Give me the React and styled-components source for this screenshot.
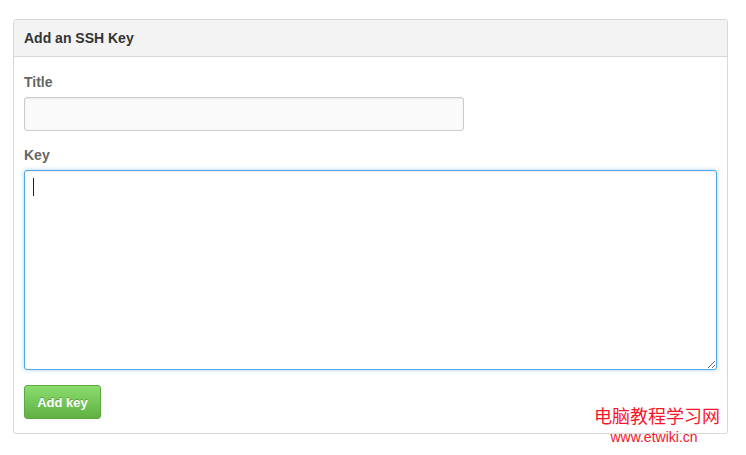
import React from "react";
import styled, { createGlobalStyle } from "styled-components";

const Global = createGlobalStyle`
  html, body { margin: 0; padding: 0; background: #fff; }
  body { font-family: "Liberation Sans", Arial, sans-serif; }
`;

const Page = styled.div`
  position: relative;
  width: 746px;
  height: 455px;
  padding: 19px 0 0 13px;
  box-sizing: border-box;
`;

const Box = styled.div`
  width: 715px;
  height: 415px;
  box-sizing: border-box;
  border: 1px solid #d8d8d8;
  border-radius: 3px;
  background: #fff;
  display: flex;
  flex-direction: column;
`;

const Header = styled.div`
  height: 37px;
  box-sizing: border-box;
  background: #f3f3f3;
  border-bottom: 1px solid #d8d8d8;
  border-radius: 3px 3px 0 0;
  padding: 0 10px;
  display: flex;
  align-items: center;
  font-size: 14px;
  font-weight: bold;
  color: #333;
`;

const Body = styled.div`
  padding: 16px 10px 0 10px;
  display: flex;
  flex-direction: column;
  align-items: flex-start;
`;

const Label = styled.label`
  font-size: 14px;
  font-weight: bold;
  color: #666;
  line-height: 18px;
  margin-bottom: 6px;
`;

const Input = styled.input`
  width: 440px;
  height: 34px;
  box-sizing: border-box;
  border: 1px solid #ccc;
  border-radius: 3px;
  background: #fafafa;
  box-shadow: inset 0 1px 2px rgba(0, 0, 0, 0.075);
  margin: 0 0 15px 0;
  outline: none;
  font: 13px "Liberation Sans", Arial, sans-serif;
`;

const AreaWrap = styled.div`
  position: relative;
  margin-bottom: 15px;
`;

const TextArea = styled.textarea`
  display: block;
  width: 693px;
  height: 200px;
  box-sizing: border-box;
  border: 1px solid #51a7e8;
  border-radius: 3px;
  box-shadow: inset 0 1px 2px rgba(0, 0, 0, 0.075), 0 0 4px rgba(81, 167, 232, 0.5);
  background: #fff;
  outline: none;
  margin: 0;
  resize: both;
  font: 13px "Liberation Sans", Arial, sans-serif;
`;

const Caret = styled.span`
  position: absolute;
  left: 9px;
  top: 8px;
  width: 1px;
  height: 18px;
  background: #222;
`;

const Button = styled.button`
  width: 77px;
  height: 34px;
  box-sizing: border-box;
  border: 1px solid #5ca941;
  border-radius: 3px;
  background: linear-gradient(#8add6d, #60b044);
  color: #fff;
  font: bold 13px "Liberation Sans", Arial, sans-serif;
  text-shadow: 0 -1px 0 rgba(0, 0, 0, 0.25);
  padding: 0;
  cursor: pointer;
`;

const Watermark = styled.div`
  position: absolute;
  left: 594px;
  top: 404px;
  display: flex;
  flex-direction: column;
  align-items: center;
  color: #f5162b;
  font-family: "Liberation Sans", "Noto Sans CJK SC", sans-serif;
`;

const WmTitle = styled.div`
  font-size: 18px;
  line-height: 22px;
  font-family: "Noto Sans CJK SC", sans-serif;
`;

const WmUrl = styled.div`
  font-size: 14px;
  line-height: 16px;
  margin-top: 3px;
  margin-right: 6px;
`;

export default function App() {
  return (
    <>
      <Global />
      <Page>
        <Box>
          <Header>Add an SSH Key</Header>
          <Body>
            <Label>Title</Label>
            <Input type="text" />
            <Label>Key</Label>
            <AreaWrap>
              <TextArea />
              <Caret />
            </AreaWrap>
            <Button>Add key</Button>
          </Body>
        </Box>
        <Watermark>
          <WmTitle>电脑教程学习网</WmTitle>
          <WmUrl>www.etwiki.cn</WmUrl>
        </Watermark>
      </Page>
    </>
  );
}
